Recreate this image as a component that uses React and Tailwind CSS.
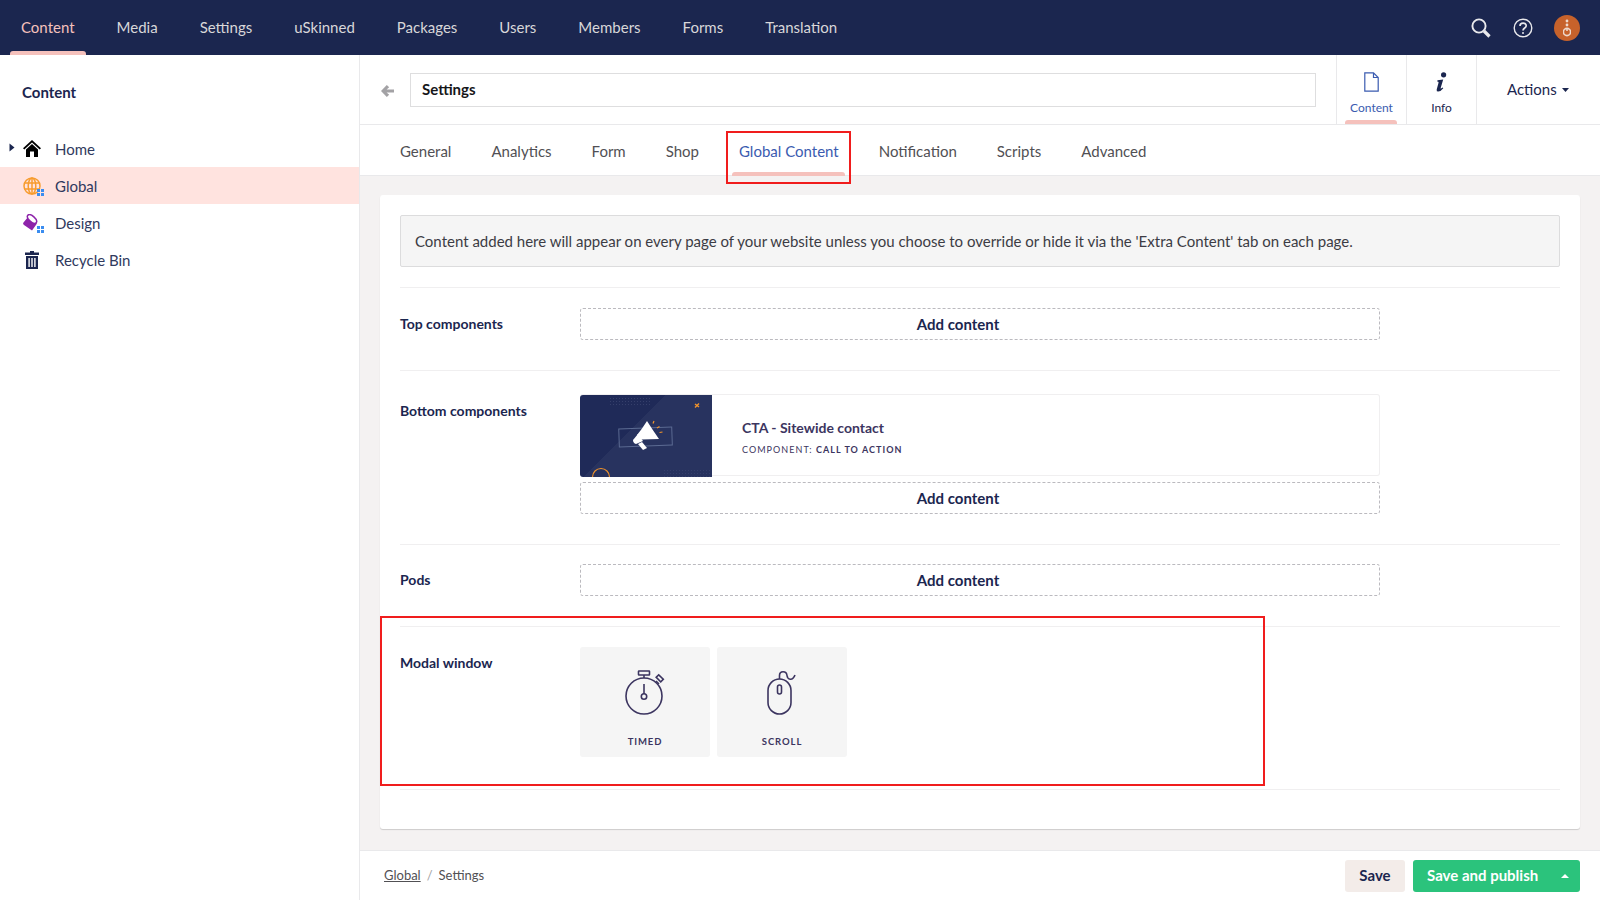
import React from "react";

const nav = ["Content", "Media", "Settings", "uSkinned", "Packages", "Users", "Members", "Forms", "Translation"];
const tabs = ["General", "Analytics", "Form", "Shop", "Global Content", "Notification", "Scripts", "Advanced"];

function Dots() {
  return (
    <span className="absolute left-[14px] top-[13px] grid grid-cols-2 gap-[1px]">
      <i className="block w-[3px] h-[3px] bg-[#3b8df0]" />
      <i className="block w-[3px] h-[3px] bg-[#3b8df0]" />
      <i className="block w-[3px] h-[3px] bg-[#3b8df0]" />
      <i className="block w-[3px] h-[3px] bg-[#3b8df0]" />
    </span>
  );
}

function HomeIcon() {
  return (
    <svg width="18" height="17" viewBox="0 0 18 17">
      <path d="M9 0 L18 8.2 L16.7 9.6 L9 2.6 L1.3 9.6 L0 8.2 Z" fill="#000" />
      <path d="M3 9.4 L9 4 L15 9.4 V17 H11 V11.5 H7 V17 H3 Z" fill="#000" />
    </svg>
  );
}

function GlobeIcon() {
  return (
    <svg width="18" height="18" viewBox="0 0 18 18" fill="none" stroke="#f79c2e" strokeWidth="1.5">
      <circle cx="9" cy="9" r="8" />
      <ellipse cx="9" cy="9" rx="3.8" ry="8" />
      <path d="M1.5 6 H16.5 M1.5 12 H16.5 M9 1 V17" />
    </svg>
  );
}

function DesignIcon() {
  return (
    <svg width="16" height="17" viewBox="0 0 16 17">
      <path d="M5 3 L14 9.5 L9 16.5 L1 11 Q-0.5 10 0.5 8.5 Z" fill="#8e24aa" />
      <ellipse cx="9" cy="5" rx="5.6" ry="2.8" transform="rotate(42 9 5)" fill="#fff" stroke="#8e24aa" strokeWidth="1.5" />
    </svg>
  );
}

function TrashIcon() {
  return (
    <svg width="14" height="18" viewBox="0 0 14 18">
      <path d="M5 0 H9 V1.5 H14 V4 H0 V1.5 H5 Z" fill="#1b264f" />
      <path fillRule="evenodd" d="M1 5 H13 V18 H1 Z M3.4 7 V16 H4.8 V7 Z M6.3 7 V16 H7.7 V7 Z M9.2 7 V16 H10.6 V7 Z" fill="#1b264f" />
    </svg>
  );
}

function TreeRow({ icon, label, active, caret, dots }) {
  return (
    <div className={`relative h-[37px] flex items-center pl-[23px] ${active ? "bg-[#ffe3df]" : ""}`}>
      {caret && (
        <svg className="absolute left-[9px] top-[13px]" width="6" height="9" viewBox="0 0 6 9">
          <path d="M0.5 0.5 L5.5 4.5 L0.5 8.5 Z" fill="#1b264f" />
        </svg>
      )}
      <span className="relative w-[32px] h-[20px] flex items-center">
        {icon}
        {dots && <Dots />}
      </span>
      <span className="pt-[2px] text-[15px] text-[#303a5e]">{label}</span>
    </div>
  );
}

function AddContent() {
  return (
    <div className="h-[32px] w-full border border-dashed border-[#bbbabf] rounded-[3px] flex items-center justify-center text-[15px] font-bold text-[#1b264f]">
      <span className="mr-[44px]">Add content</span>
    </div>
  );
}

function Row({ label, children, className }) {
  return (
    <div className={`flex border-b border-[#f0eff0] ${className}`}>
      <div className="w-[180px] shrink-0 text-[14px] font-bold text-[#1b264f]">{label}</div>
      <div className="w-[800px]">{children}</div>
    </div>
  );
}

function StopwatchIcon() {
  return (
    <svg width="40" height="46" viewBox="0 0 40 46" fill="none" stroke="#3c3560" strokeWidth="1.6">
      <circle cx="19" cy="26" r="18" />
      <rect x="13.5" y="1" width="11" height="4" rx="0.5" />
      <path d="M19 5 V8" />
      <path d="M19 14 V24" />
      <circle cx="19" cy="26.5" r="2.7" />
      <path d="M31 11 L34 14" />
      <rect x="31.5" y="6.5" width="6.5" height="3.6" transform="rotate(45 34.7 8.3)" />
    </svg>
  );
}

function MouseIcon() {
  return (
    <svg width="30" height="46" viewBox="0 0 30 46" fill="none" stroke="#3c3560" strokeWidth="1.6">
      <rect x="1" y="9" width="23" height="35" rx="11.5" />
      <rect x="10.5" y="15" width="4" height="9" rx="2" />
      <path d="M12.5 9 V5.5 C12.5 0.5 19.5 0.5 20 5.5 C20.4 9.5 25.5 11.5 28 5" />
    </svg>
  );
}

function Tile({ icon, label }) {
  return (
    <div className="w-[130px] h-[110px] bg-[#f5f5f5] rounded-[3px] flex flex-col items-center pt-[23px]">
      <div className="h-[46px] flex items-center justify-center">{icon}</div>
      <div className="mt-[19px] text-[9.5px] font-bold tracking-[0.9px] text-[#3c3560]">{label}</div>
    </div>
  );
}

function Thumb() {
  return (
    <div className="relative w-[132px] h-[82px] shrink-0 rounded-l-[3px] overflow-hidden bg-[linear-gradient(135deg,#1f2a58_0%,#1f2a58_40%,#28335f_40%,#28335f_100%)]">
      <svg className="absolute inset-0" width="132" height="82" viewBox="0 0 132 82">
        <defs>
          <pattern id="thumbDots" width="3" height="3" patternUnits="userSpaceOnUse">
            <rect width="1" height="1" fill="#353f6b" />
          </pattern>
        </defs>
        <rect x="30" y="2" width="40" height="8" fill="url(#thumbDots)" />
        <rect x="82" y="75" width="50" height="7" fill="url(#thumbDots)" />
        <rect x="39" y="33" width="53" height="18" fill="none" stroke="#5b6a92" strokeWidth="1" transform="rotate(-2 65 41)" />
        <path d="M67 26 Q72 34 79 44 L61 44.5 L57 40 Q62 34 67 26 Z" fill="#fff" />
        <path d="M53 45 L58 39 L63 46 L56 49 Q53 48 53 45 Z" fill="#fff" />
        <path d="M58 49 L62 47 L67 53 L63 55 Z" fill="#fff" />
        <path d="M73 28.5 L74 26 M77 33 L79.5 31.5 M79.5 37.5 L82.5 37" stroke="#f0932b" strokeWidth="1.2" />
        <path d="M115 9 L119 12 M119 8.5 L115 12.5" stroke="#f0932b" strokeWidth="1.4" />
        <circle cx="21" cy="82" r="8.5" fill="none" stroke="#f0932b" strokeWidth="1.1" />
      </svg>
    </div>
  );
}

export default function App() {
  return (
    <div className="relative w-[1600px] h-[900px] overflow-hidden bg-white font-['Lato','Noto_Sans',sans-serif] flex flex-col">
      <header className="h-[55px] shrink-0 bg-[#1b264f] flex items-center pr-[20px]">
        {nav.map((n, i) => (
          <div key={n} className={`relative h-full flex items-center px-[21px] text-[15px] ${i === 0 ? "text-[#f5c1bc]" : "text-[#d8d7d9]"}`}>
            {n}
            {i === 0 && <span className="absolute left-[10px] right-[10px] bottom-0 h-[4px] rounded-t-[3px] bg-[#f5c1bc]" />}
          </div>
        ))}
        <div className="ml-auto flex items-center">
          <svg width="20" height="20" viewBox="0 0 20 20" fill="none" stroke="#e9e9ec">
            <circle cx="8" cy="8" r="6.6" strokeWidth="1.9" />
            <path d="M13 13 L18.5 18.5" strokeWidth="3.2" />
          </svg>
          <svg className="ml-[22px]" width="20" height="20" viewBox="0 0 20 20" fill="none" stroke="#e9e9ec" strokeWidth="1.4">
            <circle cx="10" cy="10" r="8.8" />
            <path d="M7 8 C7 4.2 13.2 4.2 13.2 7.8 C13.2 10 10 10 10 12.5" strokeWidth="1.7" />
            <circle cx="10" cy="15" r="1" fill="#e9e9ec" stroke="none" />
          </svg>
          <div className="ml-[21px] w-[26px] h-[26px] rounded-full bg-[#c7622b] flex items-center justify-center">
            <svg width="8" height="18" viewBox="0 0 8 18">
              <circle cx="4" cy="2" r="1.4" fill="#eed9cc" />
              <circle cx="4" cy="6" r="1.4" fill="#eed9cc" />
              <circle cx="4" cy="13" r="3.6" fill="none" stroke="#eed9cc" strokeWidth="1.6" />
              <path d="M4 9 V12" stroke="#eed9cc" strokeWidth="1.6" />
            </svg>
          </div>
        </div>
      </header>

      <div className="flex-1 flex min-h-0">
        <aside className="w-[360px] shrink-0 border-r border-[#e9e9eb] bg-white">
          <div className="pl-[22px] pt-[26px] h-[75px] text-[15px] font-bold text-[#1b264f]">Content</div>
          <TreeRow caret label="Home" icon={<HomeIcon />} />
          <TreeRow active dots label="Global" icon={<GlobeIcon />} />
          <TreeRow dots label="Design" icon={<DesignIcon />} />
          <TreeRow label="Recycle Bin" icon={<span className="pl-[2px]"><TrashIcon /></span>} />
        </aside>

        <main className="flex-1 flex flex-col min-w-0">
          <div className="h-[70px] shrink-0 flex border-b border-[#e9e9eb]">
            <div className="flex-1 flex items-center pl-[21px] pr-[20px]">
              <svg width="13" height="12" viewBox="0 0 13 12" className="shrink-0 mt-[3px]">
                <path d="M5.8 0 L8.2 2.2 L5.6 4.4 H13 V7.6 H5.6 L8.2 9.8 L5.8 12 L0 6 Z" fill="#a3a2a5" />
              </svg>
              <div className="ml-[16px] flex-1 h-[34px] border border-[#dededf] flex items-center pl-[11px] text-[15px] font-bold text-[#16161a]">Settings</div>
            </div>
            <div className="relative w-[70px] border-l border-[#e9e9eb] flex flex-col items-center pt-[17px] text-[#3a5bb0]">
              <svg width="15" height="20" viewBox="0 0 15 20" fill="none" stroke="#3a5bb0" strokeWidth="1.2">
                <path d="M0.8 0.8 H9.5 L14.2 5.5 V19.2 H0.8 Z M9.5 0.8 V5.5 H14.2" />
              </svg>
              <span className="mt-[8px] text-[12px] leading-[16px]">Content</span>
              <span className="absolute left-[8px] right-[9px] bottom-0 h-[4px] rounded-t-[3px] bg-[#f5c1bc]" />
            </div>
            <div className="w-[70px] border-l border-[#e9e9eb] flex flex-col items-center pt-[17px] text-[#1b264f]">
              <svg width="11" height="20" viewBox="0 0 11 20">
                <circle cx="7.6" cy="2.8" r="2.6" fill="#1b264f" />
                <path d="M1.5 8.2 L7.2 7.4 L4.6 16.2 Q4.6 17 6.6 15.4 L7.3 16.2 Q4.6 19.6 2.2 19.6 Q0.2 19.6 0.7 17.4 L2.6 10.4 Q2.6 9.6 1.2 9.6 Z" fill="#1b264f" />
              </svg>
              <span className="mt-[8px] text-[12px] leading-[16px]">Info</span>
            </div>
            <div className="w-[124px] border-l border-[#e9e9eb] flex items-center pl-[30px] text-[15px] text-[#1b264f]">
              Actions
              <svg className="ml-[5px]" width="7" height="4" viewBox="0 0 7 4"><path d="M0 0 H7 L3.5 4 Z" fill="#1b264f" /></svg>
            </div>
          </div>

          <div className="h-[51px] shrink-0 flex pl-[27px] gap-[14px] border-b border-[#e9e9eb] bg-white">
            {tabs.map((t) => (
              <div key={t} className={`relative h-full flex items-center px-[13px] pt-[3px] text-[15px] ${t === "Global Content" ? "text-[#3a5bb0]" : "text-[#515054]"}`}>
                {t}
                {t === "Global Content" && <span className="absolute left-[6px] right-[7px] bottom-[-1px] h-[4px] rounded-t-[3px] bg-[#f5c1bc]" />}
              </div>
            ))}
          </div>

          <div className="flex-1 min-h-0 bg-[#f4f2f2] px-[20px] pt-[19px]">
            <div className="h-[634px] bg-white rounded-[3px] px-[20px] pt-[20px] shadow-[0_1px_1px_rgba(0,0,0,0.16)]">
              <div className="h-[52px] bg-[#f5f5f5] border border-[#dcdcdd] rounded-[2px] flex items-center pl-[14px] text-[15px] text-[#3c3c44]">
                Content added here will appear on every page of your website unless you choose to override or hide it via the 'Extra Content' tab on each page.
              </div>
              <div className="border-b border-[#f0eff0] h-[21px]" />
              <Row label="Top components" className="h-[83px] pt-[20px] [&>div:first-child]:pt-[5px]">
                <AddContent />
              </Row>
              <Row label="Bottom components" className="h-[174px] pt-[23px] [&>div:first-child]:pt-[6px]">
                <div className="h-[82px] flex border-y border-r border-[#f0eff0] rounded-[3px]">
                  <Thumb />
                  <div className="pl-[30px] pt-[24px]">
                    <div className="text-[14px] font-bold text-[#3c3560] leading-[18px]">CTA - Sitewide contact</div>
                    <div className="mt-[6px] text-[9px] tracking-[1.05px] text-[#3c3560] leading-[14px]">
                      COMPONENT: <b>CALL TO ACTION</b>
                    </div>
                  </div>
                </div>
                <div className="mt-[6px]"><AddContent /></div>
              </Row>
              <Row label="Pods" className="h-[82px] pt-[19px] [&>div:first-child]:pt-[5px]">
                <AddContent />
              </Row>
              <Row label="Modal window" className="h-[163px] pt-[20px] [&>div:first-child]:pt-[5px]">
                <div className="flex gap-[7px]">
                  <Tile label="TIMED" icon={<StopwatchIcon />} />
                  <Tile label="SCROLL" icon={<MouseIcon />} />
                </div>
              </Row>
            </div>
          </div>

          <footer className="h-[50px] shrink-0 bg-white border-t border-[#e9e9eb] flex items-center pl-[24px] pr-[20px]">
            <span className="text-[13px] text-[#515054] underline">Global</span>
            <span className="mx-[6px] text-[13px] text-[#a3a2a5]">/</span>
            <span className="text-[13px] text-[#515054]">Settings</span>
            <div className="ml-auto flex gap-[8px]">
              <div className="w-[60px] h-[32px] rounded-[3px] bg-[#f3ece9] flex items-center justify-center text-[15px] font-bold text-[#1b264f]">Save</div>
              <div className="w-[167px] h-[32px] rounded-[3px] bg-[#2bc37c] flex items-center pl-[14px] text-[15px] font-bold text-white">
                Save and publish
                <svg className="ml-auto mr-[11px]" width="8" height="4" viewBox="0 0 8 4"><path d="M0 4 H8 L4 0 Z" fill="#fff" /></svg>
              </div>
            </div>
          </footer>
        </main>
      </div>

      <div className="absolute left-[380px] top-[616px] w-[885px] h-[170px] border-2 border-[#f01d1d] pointer-events-none" />
      <div className="absolute left-[726px] top-[131px] w-[125px] h-[53px] border-2 border-[#f01d1d] pointer-events-none" />
    </div>
  );
}
